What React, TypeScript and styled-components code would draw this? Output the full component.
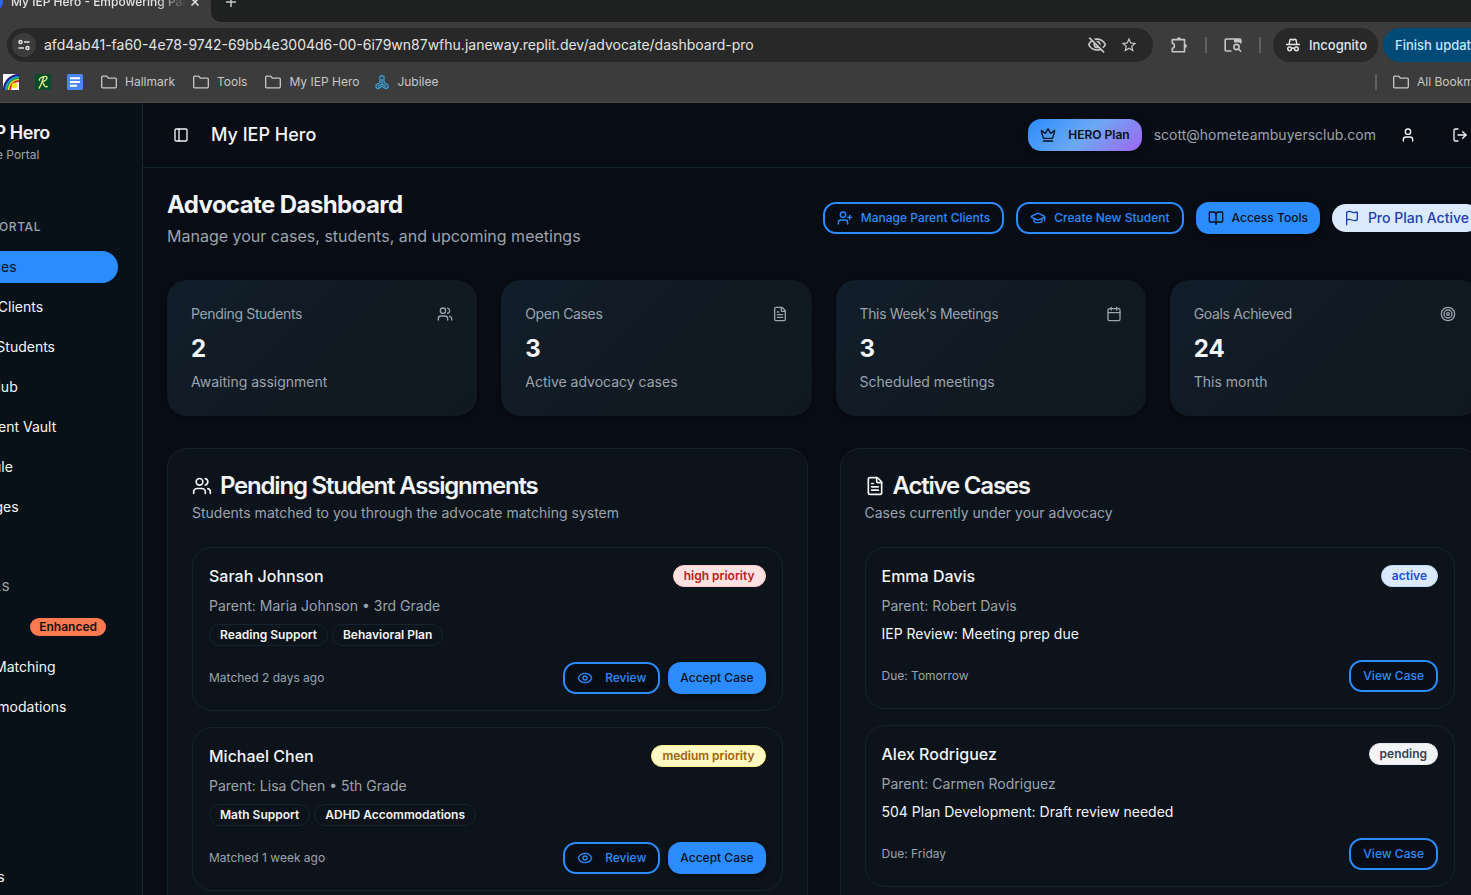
import React from 'react';
import styled, { createGlobalStyle, css } from 'styled-components';
import {
  BookOpen, Briefcase, Calendar, Crown, Eye, FileText, Flag, FolderLock, GraduationCap, LogOut,
  MessageSquare, PanelLeft, Settings, Sparkles, Target, User, UserPlus, Users, Wrench,
} from 'lucide-react';
import { MdOutlineVisibilityOff, MdStarBorder } from 'react-icons/md';

const color = {
  bg: '#080c14',
  side: '#091118',
  panel: '#0c131a',
  line: '#152431',
  text: '#f4f5f7',
  muted: '#9ba4ae',
  blue: '#2b8cff',
  ink: '#080f1a',
};

const GlobalStyle = createGlobalStyle`
  *, *::before, *::after { box-sizing: border-box; }
  html { background: ${color.bg}; }
  body { margin: 0; overflow: hidden; font-family: Inter, sans-serif; font-size: 14px; line-height: 20px; color: ${color.text}; -webkit-font-smoothing: antialiased; }
  h1, h2, h3, p, ul { margin: 0; padding: 0; }
  button { font-family: inherit; cursor: pointer; }
  a { color: inherit; text-decoration: none; }
  svg { flex: none; display: block; }
`;

/* ---------- browser frame ---------- */

const Browser = styled.div`
  background: #3c3c3c;
  color: #e3e3e3;
  border-bottom: 1px solid #4c4c4c;
  height: 103px;
  overflow: hidden;
`;

const TabStrip = styled.div`
  display: flex;
  height: 22px;
  background: #3c3c3c;
`;

const Tab = styled.div`
  display: flex;
  align-items: center;
  flex: none;
  width: 211px;
  height: 4px;
  font-size: 12px;
  font-weight: 500;
  white-space: nowrap;
`;

const TabIcon = styled.span`
  width: 16px;
  height: 16px;
  margin-left: -13px;
  margin-right: 8px;
  border-radius: 50%;
  background: #2f66f0;
`;

const TabTitle = styled.span`
  width: 177px;
  overflow: hidden;
  line-height: 20px;
  mask-image: linear-gradient(90deg, #000 146px, transparent 175px);
`;

const TabRest = styled.div`
  flex: 1;
  display: flex;
  background: #1f2120;
  border-bottom-left-radius: 10px;
  padding-left: 13px;
`;

const PlainButton = styled.button`
  display: flex;
  align-items: center;
  justify-content: center;
  flex: none;
  border: 0;
  padding: 0;
  background: none;
  color: inherit;
`;

const TabButton = styled(PlainButton)`
  width: 14px;
  height: 4px;
`;

const Toolbar = styled.div`
  display: flex;
  align-items: center;
  height: 46px;
  margin: 0 -34px 0 7px;
`;

const Omnibox = styled.div`
  flex: 1;
  min-width: 0;
  display: flex;
  align-items: center;
  height: 34px;
  padding: 0 15px 0 5px;
  border-radius: 17px;
  background: #282828;
`;

const SiteButton = styled(PlainButton)`
  width: 24px;
  height: 24px;
  border-radius: 50%;
  background: #3c3c3c;
`;

const Address = styled.input`
  flex: 1;
  min-width: 0;
  height: 20px;
  margin: 0 16px 0 8px;
  padding: 0 0 2px;
  border: 0;
  outline: 0;
  background: none;
  color: #e3e3e3;
  font-family: inherit;
  font-size: 14px;
`;

const OmniIcons = styled.div`
  display: flex;
  align-items: center;
  gap: 13px;
  color: #c7c7c7;
`;

const ToolIcons = styled.div`
  display: flex;
  align-items: center;
  gap: 17px;
  padding: 0 12px 0 17px;
  color: #c7c7c7;
`;

const Divider = styled.span`
  flex: none;
  width: 2px;
  height: 16px;
  background: #606060;
`;

const Incognito = styled.div`
  display: flex;
  align-items: center;
  gap: 8px;
  flex: none;
  height: 34px;
  width: 105px;
  padding-left: 12px;
  border-radius: 17px;
  background: #282828;
  font-size: 13px;
  font-weight: 500;
`;

const UpdateButton = styled.button`
  flex: none;
  width: 122px;
  height: 34px;
  margin-left: 5px;
  padding: 0 0 0 12px;
  border: 0;
  border-radius: 17px;
  background: #004a77;
  color: #c2e7ff;
  font-size: 13px;
  font-weight: 500;
  text-align: left;
  white-space: nowrap;
`;

const Bookmarks = styled.nav`
  display: flex;
  align-items: center;
  height: 28px;
  margin: 0 -34px 0 3px;
  font-size: 12px;
  color: #c7c7c7;
`;

const Bookmark = styled.a`
  display: flex;
  align-items: center;
  gap: 8px;
  margin-right: 18px;
  white-space: nowrap;
`;

const IconBookmark = styled(Bookmark)`
  margin-right: 16px;
`;

const FolderBookmark = styled(Bookmark)`
  margin-right: 16px;
`;

const BookmarkEnd = styled.div`
  display: flex;
  align-items: center;
  gap: 16px;
  width: 130px;
  margin-left: auto;
`;

/* ---------- application shell ---------- */

const Shell = styled.div`
  display: flex;
  margin: 0 -33px 0 -113px;
`;

const Sidebar = styled.aside`
  flex: none;
  width: 256px;
  padding: 16px 24px;
  background: ${color.side};
  border-right: 1px solid ${color.line};
`;

const Brand = styled.div`
  height: 84px;
  padding-left: 38px;
`;

const BrandName = styled.div`
  font-size: 18px;
  line-height: 28px;
  font-weight: 600;
  letter-spacing: -0.025em;
`;

const BrandSub = styled.div`
  font-size: 12px;
  line-height: 16px;
  color: ${color.muted};
`;

const NavTitle = styled.h3`
  height: 32px;
  margin: 8px 0;
  padding-left: 6px;
  font-size: 12px;
  line-height: 32px;
  font-weight: 500;
  letter-spacing: 0.05em;
  color: ${color.muted};
`;

const NavGroup = styled.section<{ $last?: boolean }>`
  margin-bottom: ${p => (p.$last ? 0 : 48)}px;
  ${p => p.$last && css`padding-top: 90px;`}
`;

const NavList = styled.ul`
  display: flex;
  flex-direction: column;
  gap: 8px;
  list-style: none;
`;

const NavLink = styled.a<{ $active?: boolean }>`
  display: flex;
  align-items: center;
  gap: 8px;
  height: 32px;
  padding: 0 12px 0 16px;
  border-radius: 16px;
  white-space: nowrap;
  ${p => p.$active && css`
    background: ${color.blue};
    color: ${color.ink};
  `}
`;

const Enhanced = styled.span`
  margin-left: auto;
  padding: 0 9px;
  border-radius: 9px;
  background: #ff7a50;
  color: #14110f;
  font-size: 12px;
  line-height: 18px;
  font-weight: 600;
`;

const Content = styled.div`
  flex: 1;
  min-width: 0;
`;

const TopBar = styled.header`
  display: flex;
  align-items: center;
  height: 65px;
  padding: 0 24px;
  border-bottom: 1px solid ${color.line};
`;

const IconButton = styled(PlainButton)<{ $w: number }>`
  width: ${p => p.$w}px;
  height: 32px;
`;

const SiteName = styled.div`
  margin: 0 auto 0 16px;
  font-size: 18px;
  line-height: 28px;
  font-weight: 500;
`;

const Account = styled.div`
  display: flex;
  align-items: center;
  gap: 12px;
  color: ${color.muted};

  ${IconButton} { color: ${color.text}; }
`;

const Button = styled.button<{ $kind?: 'solid' | 'hero' }>`
  display: inline-flex;
  align-items: center;
  gap: 8px;
  height: 32px;
  padding: 0 12px;
  border: 2px solid ${color.blue};
  border-radius: 13px;
  background: ${color.bg};
  color: ${color.blue};
  font-size: 12px;
  line-height: 16px;
  font-weight: 500;
  white-space: nowrap;
  ${p => p.$kind && css`
    border: 0;
    background: ${color.blue};
    color: ${color.ink};
    box-shadow: 0 2px 5px rgba(0, 0, 0, 0.5);
  `}
  ${p => p.$kind === 'hero' && css`
    gap: 12px;
    background: linear-gradient(135deg, #2b8cff 0%, #6ca9f4 50%, #a066f0 100%);
    font-weight: 600;
  `}
`;

const Main = styled.main`
  padding: 20px 24px 24px;
`;

const PageHead = styled.div`
  display: flex;
  align-items: center;
  justify-content: space-between;
  margin-bottom: 32px;
`;

const PageTitle = styled.h1`
  font-size: 24px;
  line-height: 34px;
  font-weight: 700;
  letter-spacing: -0.025em;
`;

const Lead = styled.p`
  margin-top: 2px;
  font-size: 16px;
  line-height: 24px;
  color: ${color.muted};
`;

const Actions = styled.div`
  display: flex;
  align-items: center;
  gap: 12px;
`;

const PlanBadge = styled.span`
  display: flex;
  align-items: center;
  gap: 8px;
  height: 28px;
  padding: 0 11px 0 12px;
  border-radius: 14px;
  background: #dbeafe;
  color: #1e40af;
  font-weight: 500;
  white-space: nowrap;
`;

const Stats = styled.div`
  display: grid;
  grid-template-columns: repeat(4, 1fr);
  gap: 24px;
  margin-bottom: 32px;
`;

const StatCard = styled.section`
  padding: 24px;
  border-radius: 20px;
  background: linear-gradient(135deg, #111e2a 0%, #111922 60%, #101820 100%);
  box-shadow: 0 1px 3px rgba(0, 0, 0, 0.5);
  color: ${color.muted};
`;

const StatHead = styled.div`
  display: flex;
  align-items: center;
  justify-content: space-between;
  margin-bottom: 8px;
  letter-spacing: -0.025em;
`;

const StatValue = styled.div`
  margin-bottom: 6px;
  font-size: 24px;
  line-height: 34px;
  font-weight: 700;
  color: ${color.text};
`;

const Panels = styled.div`
  display: grid;
  grid-template-columns: 1fr 1fr;
  gap: 32px;
`;

const Panel = styled.section`
  padding: 24px;
  border: 1px solid ${color.line};
  border-radius: 20px;
  background: ${color.panel};
`;

const PanelTitle = styled.h2`
  display: flex;
  align-items: center;
  gap: 8px;
  margin-bottom: 4px;
  font-size: 24px;
  line-height: 26px;
  font-weight: 600;
  letter-spacing: -0.05em;
`;

const Muted = styled.p`
  color: ${color.muted};
`;

const CaseList = styled.div`
  display: flex;
  flex-direction: column;
  gap: 16px;
  margin-top: 24px;
`;

const CaseCard = styled.article`
  display: flex;
  flex-direction: column;
  gap: 8px;
  padding: 16px;
  border: 1px solid ${color.line};
  border-radius: 20px;
`;

const Row = styled.div`
  display: flex;
  align-items: center;
  justify-content: space-between;
`;

const FootRow = styled(Row)`
  margin-top: 8px;
  font-size: 12px;
  color: ${color.muted};
`;

const Name = styled.h3`
  font-size: 16px;
  line-height: 24px;
  font-weight: 500;
`;

const Tags = styled.div`
  display: flex;
  gap: 4px;
`;

const tones = {
  plain: ['transparent', color.text, color.line],
  high: ['#fee2e2', '#b91c1c', '#fecaca'],
  medium: ['#fef9c3', '#a16207', '#fef08a'],
  active: ['#dbeafe', '#1d4ed8', '#bfdbfe'],
  pending: ['#f3f4f6', '#374151', '#e5e7eb'],
};

const Pill = styled.span<{ $tone: keyof typeof tones }>`
  padding: 0 10px;
  border: 1px solid ${p => tones[p.$tone][2]};
  border-radius: 11px;
  background: ${p => tones[p.$tone][0]};
  color: ${p => tones[p.$tone][1]};
  font-size: 12px;
  line-height: 20px;
  font-weight: 600;
`;

const CaseActions = styled.div`
  display: flex;
  gap: 8px;
`;

const ReviewLabel = styled.span`
  margin-left: 4px;
`;

/* ---------- drawings ---------- */

const FolderIcon = () => (
  <svg width="16" height="16" viewBox="0 0 16 16" fill="none" stroke="currentColor" strokeWidth="1.3" strokeLinejoin="round">
    <path d="M.7 3.2a1 1 0 0 1 1-1h4l1.600 1.900h7a1 1 0 0 1 1 1v7.700a1 1 0 0 1-1 1H1.700a1 1 0 0 1-1-1z" />
  </svg>
);

const RainbowIcon = () => (
  <svg width="16" height="16" viewBox="0 0 16 16">
    <rect width="16" height="16" fill="#fff" />
    <path d="M0 16A15.500 15.500 0 0 1 15.500 0H16v16z" fill="#1d1b86" />
    <path d="M2 16A14 14 0 0 1 16 2v14z" fill="#1ba4d8" />
    <path d="M3.500 16A12.500 12.500 0 0 1 16 3.500V16z" fill="#2f9a3a" />
    <path d="M5 16A11 11 0 0 1 16 5v11z" fill="#f4ec3a" />
    <path d="M6 16A10 10 0 0 1 16 6v10z" fill="#e2281c" />
    <path d="M8 16a8 8 0 0 1 8-8v8z" fill="#fff" />
    <circle cx="11.500" cy="11.500" r="2.800" fill="#f6e620" />
  </svg>
);

const ScriptIcon = () => (
  <svg width="16" height="16" viewBox="0 0 16 16">
    <rect width="16" height="16" fill="#084b28" />
    <path d="M4.500 6.200C3.600 3.600 11.600.6 12 3.600c.2 2.200-3 4-5.400 4.300 2.600-.3 1.800 6.200 5.600 4.600M8.600 3.200C7.400 6.400 6.400 11 4.200 14" fill="none" stroke="#dff08a" strokeWidth="1.400" strokeLinecap="round" />
  </svg>
);

const DocIcon = () => (
  <svg width="16" height="16" viewBox="0 0 16 16">
    <rect width="16" height="16" rx="1.500" fill="#4a86f5" />
    <path d="M3 4.200h10M3 8h10M3 11.800h7" stroke="#fff" strokeWidth="1.900" />
  </svg>
);

const JubileeIcon = () => (
  <svg width="14" height="16" viewBox="0 0 14 16" fill="none" stroke="#3ea2dc" strokeWidth="1.300" strokeLinejoin="round">
    <path d="M5 8.500V2.700L7 1.400l2 1.300v5.800M5 8.500L1 11v2.600l2.200 1L7 12.300l3.800 2.300 2.200-1V11L9 8.500M7 5v5M7 10l-4 2.400M7 10l4 2.400" />
  </svg>
);

const TuneIcon = () => (
  <svg width="14" height="14" viewBox="0 0 14 14" fill="none" stroke="#e3e3e3" strokeWidth="1.500">
    <circle cx="3.500" cy="4" r="1.500" />
    <path d="M7 4h5.500M1.500 10H7" />
    <circle cx="10.500" cy="10" r="1.500" />
  </svg>
);

const PuzzleIcon = () => (
  <svg width="18" height="18" viewBox="0 0 18 18" fill="none" stroke="currentColor" strokeWidth="1.600" strokeLinejoin="round">
    <path d="M2.300 3.600h12.200v12.200H2.300v-3.600c2.800-.4 2.800-4.600 0-5z" />
    <path d="M7 3.200a1.900 1.900 0 0 1 3.800 0zM15 8a1.900 1.900 0 0 1 0 3.800z" fill="currentColor" stroke="none" />
  </svg>
);

const SearchPanelIcon = () => (
  <svg width="18" height="18" viewBox="0 0 18 18" fill="none" stroke="currentColor" strokeWidth="1.600">
    <path d="M7.500 15H2.200a1 1 0 0 1-1-1V4a1 1 0 0 1 1-1h13.600a1 1 0 0 1 1 1v3.500" />
    <path d="M10 3h6.800v3.500H10z" fill="currentColor" stroke="none" />
    <circle cx="12.500" cy="11" r="2.600" />
    <path d="M14.400 13l2.800 2.800" />
  </svg>
);

const IncognitoIcon = () => (
  <svg width="16" height="16" viewBox="0 0 16 16" fill="none" stroke="#e3e3e3" strokeWidth="1.500">
    <path d="M1 7.600h14M4 7.600l1-4.800 1.300-.6L8 3l1.700-.8 1.300.6 1 4.800" strokeLinejoin="round" />
    <circle cx="4.600" cy="11.800" r="1.900" />
    <circle cx="11.400" cy="11.800" r="1.900" />
    <path d="M6.500 11.500q1.500-.8 3 0" />
  </svg>
);

/* ---------- data ---------- */

const portalLinks = [
  { label: 'My Cases', Icon: Briefcase, active: true },
  { label: 'Parent Clients', Icon: Users },
  { label: 'Active Students', Icon: GraduationCap },
  { label: 'Tools Hub', Icon: Wrench },
  { label: 'Document Vault', Icon: FolderLock },
  { label: 'Schedule', Icon: Calendar },
  { label: 'Messages', Icon: MessageSquare },
];

const toolLinks = [
  { label: 'Tools', Icon: Sparkles, badge: 'Enhanced' },
  { label: 'Smart Matching', Icon: Target },
  { label: 'Accommodations', Icon: FileText },
];

const stats = [
  { label: 'Pending Students', value: 2, note: 'Awaiting assignment', Icon: Users },
  { label: 'Open Cases', value: 3, note: 'Active advocacy cases', Icon: FileText },
  { label: "This Week's Meetings", value: 3, note: 'Scheduled meetings', Icon: Calendar },
  { label: 'Goals Achieved', value: 24, note: 'This month', Icon: Target },
];

const pending = [
  { name: 'Sarah Johnson', info: 'Parent: Maria Johnson • 3rd Grade', tags: ['Reading Support', 'Behavioral Plan'], when: 'Matched 2 days ago', tone: 'high' as const, priority: 'high priority' },
  { name: 'Michael Chen', info: 'Parent: Lisa Chen • 5th Grade', tags: ['Math Support', 'ADHD Accommodations'], when: 'Matched 1 week ago', tone: 'medium' as const, priority: 'medium priority' },
];

const cases = [
  { name: 'Emma Davis', parent: 'Parent: Robert Davis', task: 'IEP Review: Meeting prep due', due: 'Due: Tomorrow', status: 'active' as const },
  { name: 'Alex Rodriguez', parent: 'Parent: Carmen Rodriguez', task: '504 Plan Development: Draft review needed', due: 'Due: Friday', status: 'pending' as const },
];

const BrowserFrame = () => (
  <Browser>
    <TabStrip>
      <Tab>
        <TabIcon />
        <TabTitle>My IEP Hero - Empowering Parents</TabTitle>
        <TabButton aria-label="Close tab">
          <svg width="8" height="8" viewBox="0 0 8 8" stroke="#e3e3e3" strokeWidth="1.500"><path d="M.5.5l7 7M7.500.5l-7 7" /></svg>
        </TabButton>
      </Tab>
      <TabRest>
        <TabButton aria-label="New tab">
          <svg width="10" height="10" viewBox="0 0 10 10" stroke="#c7c7c7" strokeWidth="1.500"><path d="M5 0v10M0 5h10" /></svg>
        </TabButton>
      </TabRest>
    </TabStrip>
    <Toolbar>
      <Omnibox>
        <SiteButton aria-label="Site information"><TuneIcon /></SiteButton>
        <Address aria-label="Address" readOnly value="afd4ab41-fa60-4e78-9742-69bb4e3004d6-00-6i79wn87wfhu.janeway.replit.dev/advocate/dashboard-pro" />
        <OmniIcons>
          <MdOutlineVisibilityOff size={20} />
          <MdStarBorder size={18} />
        </OmniIcons>
      </Omnibox>
      <ToolIcons>
        <PuzzleIcon />
        <Divider />
        <SearchPanelIcon />
        <Divider />
      </ToolIcons>
      <Incognito><IncognitoIcon />Incognito</Incognito>
      <UpdateButton>Finish update</UpdateButton>
    </Toolbar>
    <Bookmarks aria-label="Bookmarks">
      <IconBookmark href="#" aria-label="Rainbow"><RainbowIcon /></IconBookmark>
      <IconBookmark href="#" aria-label="Script"><ScriptIcon /></IconBookmark>
      <Bookmark href="#" aria-label="Docs"><DocIcon /></Bookmark>
      <Bookmark href="#"><FolderIcon />Hallmark</Bookmark>
      <Bookmark href="#"><FolderIcon />Tools</Bookmark>
      <FolderBookmark href="#"><FolderIcon />My IEP Hero</FolderBookmark>
      <Bookmark href="#"><JubileeIcon />Jubilee</Bookmark>
      <BookmarkEnd>
        <Divider />
        <Bookmark href="#"><FolderIcon />All Bookmarks</Bookmark>
      </BookmarkEnd>
    </Bookmarks>
  </Browser>
);

export default function App() {
  return (
    <>
      <GlobalStyle />
      <BrowserFrame />
      <Shell>
        <Sidebar>
          <Brand>
            <BrandName>My IEP Hero</BrandName>
            <BrandSub>Advocate Portal</BrandSub>
          </Brand>
          <NavGroup>
            <NavTitle>ADVOCATE PORTAL</NavTitle>
            <NavList>
              {portalLinks.map(({ label, Icon, active }) => (
                <li key={label}><NavLink href="#" $active={active}><Icon size={16} />{label}</NavLink></li>
              ))}
            </NavList>
          </NavGroup>
          <NavGroup>
            <NavTitle>SMART TOOLS</NavTitle>
            <NavList>
              {toolLinks.map(({ label, Icon, badge }) => (
                <li key={label}><NavLink href="#"><Icon size={16} />{label}{badge && <Enhanced>{badge}</Enhanced>}</NavLink></li>
              ))}
            </NavList>
          </NavGroup>
          <NavGroup $last>
            <NavLink href="#"><Settings size={16} />Settings</NavLink>
          </NavGroup>
        </Sidebar>
        <Content>
          <TopBar>
            <IconButton $w={28} aria-label="Toggle sidebar"><PanelLeft size={16} /></IconButton>
            <SiteName>My IEP Hero</SiteName>
            <Account>
              <Button $kind="hero"><Crown size={16} />HERO Plan</Button>
              <span>scott@hometeambuyersclub.com</span>
              <IconButton $w={40} aria-label="Profile"><User size={16} /></IconButton>
              <IconButton $w={40} aria-label="Log out"><LogOut size={16} /></IconButton>
            </Account>
          </TopBar>
          <Main>
            <PageHead>
              <div>
                <PageTitle>Advocate Dashboard</PageTitle>
                <Lead>Manage your cases, students, and upcoming meetings</Lead>
              </div>
              <Actions>
                <Button><UserPlus size={16} />Manage Parent Clients</Button>
                <Button><GraduationCap size={16} />Create New Student</Button>
                <Button $kind="solid"><BookOpen size={16} />Access Tools</Button>
                <PlanBadge><Flag size={16} />Pro Plan Active</PlanBadge>
              </Actions>
            </PageHead>
            <Stats>
              {stats.map(({ label, value, note, Icon }) => (
                <StatCard key={label}>
                  <StatHead><span>{label}</span><Icon size={16} /></StatHead>
                  <StatValue>{value}</StatValue>
                  <p>{note}</p>
                </StatCard>
              ))}
            </Stats>
            <Panels>
              <Panel>
                <PanelTitle><Users size={20} />Pending Student Assignments</PanelTitle>
                <Muted>Students matched to you through the advocate matching system</Muted>
                <CaseList>
                  {pending.map(s => (
                    <CaseCard key={s.name}>
                      <Row><Name>{s.name}</Name><Pill $tone={s.tone}>{s.priority}</Pill></Row>
                      <Muted>{s.info}</Muted>
                      <Tags>{s.tags.map(t => <Pill key={t} $tone="plain">{t}</Pill>)}</Tags>
                      <FootRow>
                        <span>{s.when}</span>
                        <CaseActions>
                          <Button><Eye size={16} /><ReviewLabel>Review</ReviewLabel></Button>
                          <Button $kind="solid">Accept Case</Button>
                        </CaseActions>
                      </FootRow>
                    </CaseCard>
                  ))}
                </CaseList>
              </Panel>
              <Panel>
                <PanelTitle><FileText size={20} />Active Cases</PanelTitle>
                <Muted>Cases currently under your advocacy</Muted>
                <CaseList>
                  {cases.map(c => (
                    <CaseCard key={c.name}>
                      <Row><Name>{c.name}</Name><Pill $tone={c.status}>{c.status}</Pill></Row>
                      <Muted>{c.parent}</Muted>
                      <p>{c.task}</p>
                      <FootRow><span>{c.due}</span><Button>View Case</Button></FootRow>
                    </CaseCard>
                  ))}
                </CaseList>
              </Panel>
            </Panels>
          </Main>
        </Content>
      </Shell>
    </>
  );
}
